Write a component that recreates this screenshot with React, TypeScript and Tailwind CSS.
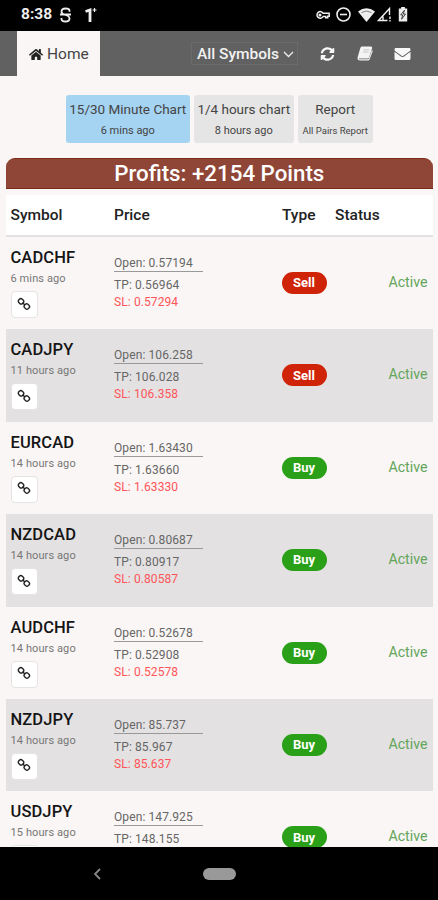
import { FaEnvelope, FaHome, FaSyncAlt } from "react-icons/fa";

const signals = [
  { symbol: "CADCHF", ago: "6 mins ago", open: "0.57194", tp: "0.56964", sl: "0.57294", type: "Sell" },
  { symbol: "CADJPY", ago: "11 hours ago", open: "106.258", tp: "106.028", sl: "106.358", type: "Sell" },
  { symbol: "EURCAD", ago: "14 hours ago", open: "1.63430", tp: "1.63660", sl: "1.63330", type: "Buy" },
  { symbol: "NZDCAD", ago: "14 hours ago", open: "0.80687", tp: "0.80917", sl: "0.80587", type: "Buy" },
  { symbol: "AUDCHF", ago: "14 hours ago", open: "0.52678", tp: "0.52908", sl: "0.52578", type: "Buy" },
  { symbol: "NZDJPY", ago: "14 hours ago", open: "85.737", tp: "85.967", sl: "85.637", type: "Buy" },
  { symbol: "USDJPY", ago: "15 hours ago", open: "147.925", tp: "148.155", sl: "", type: "Buy" },
];

function ChainIcon() {
  return (
    <svg width="14" height="14" viewBox="0 0 14 14" fill="none" stroke="#222" strokeWidth="1.4">
      <rect x="1.4" y="1.9" width="5.2" height="4.8" rx="2" transform="rotate(45 4 4.3)" />
      <rect x="7.2" y="7.1" width="5.2" height="4.8" rx="2" transform="rotate(45 9.8 9.5)" />
      <path d="M5.600 5.800l2.600 2.400" />
    </svg>
  );
}

function BookIcon() {
  return (
    <svg width="16" height="15" viewBox="0 0 16 15">
      <path fill="#f4f4f4" d="M5.200.500h8.600c1 0 1.600.8 1.300 1.800l-3 9c-.2.800-.8 1.200-1.600 1.200H2.400c-.5 0-.6.800 0 .800h8.600c.5 0 .800-.300 1-.800l3-8.600c.5.300.8.900.6 1.600l-2.900 7.700c-.3.800-1 1.300-1.900 1.300H3C1.500 14.500.2 13.300.5 11.700L3.300 2C3.600 1.100 4.200.500 5.200.500z" />
      <path stroke="#bbb" strokeWidth=".8" d="M6.500 3.800h5.700M5.900 6h5.700" />
    </svg>
  );
}

function StatusBar() {
  return (
    <div className="flex h-[31px] shrink-0 items-center bg-black pb-[2px] pl-[21px] pr-[29px] text-[#eee]">
      <span className="w-[38px] text-[15.5px] font-bold">8:38</span>
      <svg width="13" height="16" viewBox="0 0 13 16" fill="none" stroke="currentColor" strokeWidth="1.8">
        <path d="M10.500 4.800V3.800Q10.500 1.500 6.500 1.500T2.500 4.500Q2.500 7 6.500 8T10.500 11.500Q10.500 14.500 6.500 14.500T2.500 12V11M1 7.500h11" />
      </svg>
      <svg className="ml-[12px]" width="13" height="16" viewBox="0 0 13 16" fill="none" stroke="currentColor">
        <path strokeWidth="2.8" d="M1.500 4.500L6 3V15" />
        <path strokeWidth="1.200" d="M8.500 3h4M10.500 1v4" />
      </svg>
      <div className="ml-auto flex items-center">
        <svg width="14" height="10" viewBox="0 0 14 10" fill="none" stroke="currentColor" strokeWidth="1.500">
          <path d="M7.200 3.300h6v3h-1.500v1.500H9.700V6.500H7.200A3.300 3.300 0 1 1 7.200 3.300z" />
          <circle cx="4" cy="5" r=".8" />
        </svg>
        <svg className="ml-[6px]" width="15" height="15" viewBox="0 0 15 15" fill="none" stroke="currentColor" strokeWidth="1.600">
          <circle cx="7.500" cy="7.500" r="6.500" />
          <path d="M4 7.500h7" />
        </svg>
        <svg className="ml-[7px]" width="17" height="14" viewBox="0 0 17 14" fill="currentColor">
          <path d="M0 3.500Q8.500-3 17 3.500L8.500 14z" />
          <path d="M3.500 4.500q5-3 10 0" fill="none" stroke="#666" strokeWidth=".8" />
        </svg>
        <svg className="ml-[2px]" width="15" height="15" viewBox="0 0 15 15" fill="none" stroke="currentColor" strokeWidth="1.400">
          <path d="M12.500 8V1.500L1.500 13.500h9M6 13.500V9.500M13 9.500v2.500M13 13v1.500" />
        </svg>
        <svg className="ml-[6px] mr-[1px]" width="10" height="15" viewBox="0 0 10 16" fill="currentColor">
          <path d="M3 0h4v1.500h2.500v14h-9v-14H3z" />
          <path d="M6.500 3.500L2.500 8.500h2.200L3.500 13 7.700 7.500H5.400z" stroke="#111" strokeWidth=".8" />
        </svg>
      </div>
    </div>
  );
}

function Navbar() {
  return (
    <div className="flex h-[45px] shrink-0 items-center bg-[#616161] pl-[17px] pr-[27px]">
      <div className="flex h-full w-[83px] items-center bg-[#faf6f5] pl-[12px] pt-[1px] text-[15.5px] text-[#444]">
        <FaHome className="mr-[4px] h-[13px] w-[14px] text-[#222]" />
        <span className="pt-[1px]">Home</span>
      </div>
      <div className="ml-[91px] flex h-[23px] w-[107px] items-center border border-[#6b6b6b] pl-[5px] pt-[2px] text-[15.500px] font-medium text-[#f2f2f2]">
        <span className="whitespace-nowrap">All Symbols</span>
        <svg className="ml-[4px]" width="11" height="7" viewBox="0 0 11 7" fill="none" stroke="#eee" strokeWidth="1.300">
          <path d="M1 1l4.500 4.500L10 1" />
        </svg>
      </div>
      <div className="ml-auto flex items-center text-[#f8f8f8]">
        <FaSyncAlt className="h-[14px] w-[15px]" />
        <span className="ml-[22px]"><BookIcon /></span>
        <FaEnvelope className="ml-[21px] h-[16px] w-[17px]" />
      </div>
    </div>
  );
}

function Row({ item, odd }: { item: (typeof signals)[number]; odd: boolean }) {
  return (
    <div className={`flex h-[92.400px] shrink-0 pl-[4.500px] pr-[5px] ${odd ? "bg-[#e3e1e2]" : ""}`}>
      <div className="w-[103.500px] pt-[11px]">
        <div className="h-[20px] text-[16.5px] font-medium leading-[20px] tracking-[0.1px] text-[#151515]">{item.symbol}</div>
        <div className="text-[11px] leading-[21px] tracking-[0.1px] text-[#777]">{item.ago}</div>
        <div className="mt-[2px] flex h-[27px] w-[27px] items-center justify-center rounded-[4px] border border-[#e5e3e3] bg-white pb-[2px]">
          <ChainIcon />
        </div>
      </div>
      <div className="w-[167.5px] pt-[17px] text-[12px] tracking-[0.1px] text-[#666]">
        <div className="h-[18px] w-[89px] border-b border-[#999] leading-[19px]">Open: {item.open}</div>
        <div className="mt-[4px] leading-[18px]">TP: {item.tp}</div>
        {item.sl && <div className="leading-[16px] text-[#ff5558]">SL: {item.sl}</div>}
      </div>
      <div className="pt-[35px]">
        <div className={`flex h-[22px] w-[45px] items-center justify-center rounded-full text-[13px] font-bold text-white ${item.type === "Sell" ? "bg-[#cf2408]" : "bg-[#29a018]"}`}>
          {item.type}
        </div>
      </div>
      <div className="ml-auto pt-[35px] text-[14.2px] leading-[20px] text-[#63a55a]">Active</div>
    </div>
  );
}

export default function App() {
  return (
    <div className="flex h-[900px] w-[438px] flex-col overflow-hidden bg-[#faf6f5] font-['Roboto',sans-serif]">
      <StatusBar />
      <Navbar />

      <div className="flex min-h-0 flex-1 flex-col overflow-hidden pl-[6px] pr-[5.500px]">
        {/* Report tabs */}
        <div className="mt-[19px] flex h-[48px] shrink-0 justify-center gap-[4px] text-center text-[#444]">
          <div className="w-[124px] rounded-[3px] bg-[#a5d3f2] pt-[4px]">
            <div className="text-[13.5px] leading-[20px]">15/30 Minute Chart</div>
            <div className="text-[11px] leading-[23px]">6 mins ago</div>
          </div>
          <div className="w-[100px] rounded-[3px] bg-[#e6e5e5] pt-[4px]">
            <div className="text-[13.5px] leading-[20px]">1/4 hours chart</div>
            <div className="text-[11px] leading-[23px]">8 hours ago</div>
          </div>
          <div className="w-[75px] rounded-[3px] bg-[#e6e5e5] pt-[4px]">
            <div className="text-[13.5px] leading-[20px]">Report</div>
            <div className="text-[9.500px] leading-[23px]">All Pairs Report</div>
          </div>
        </div>

        {/* Signals table */}
        <div className="mt-[15px] h-[31px] shrink-0 rounded-t-[9px] border-y border-[#7e2a18] bg-[#8f4637] text-center text-[22.3px] font-medium leading-[29px] text-white">
          Profits: +2154 Points
        </div>
        <div className="mt-[6px] flex h-[42px] shrink-0 items-center border-b-2 border-[#e3e2e2] bg-white pl-[4.500px] pt-[1px] text-[15.5px] font-medium text-[#222]">
          <span className="w-[103.500px]">Symbol</span>
          <span className="w-[168px]">Price</span>
          <span className="w-[53px]">Type</span>
          <span>Status</span>
        </div>
        {signals.map((item, i) => (
          <Row key={item.symbol} item={item} odd={i % 2 === 1} />
        ))}
      </div>

      <div className="flex h-[53px] shrink-0 items-center bg-black pl-[93px]">
        <svg width="8" height="12" viewBox="0 0 8 12" fill="none" stroke="#888" strokeWidth="1.800">
          <path d="M7 1L2 6l5 5" />
        </svg>
        <div className="ml-[102px] h-[12px] w-[33px] rounded-full bg-[#999]" />
      </div>
    </div>
  );
}
